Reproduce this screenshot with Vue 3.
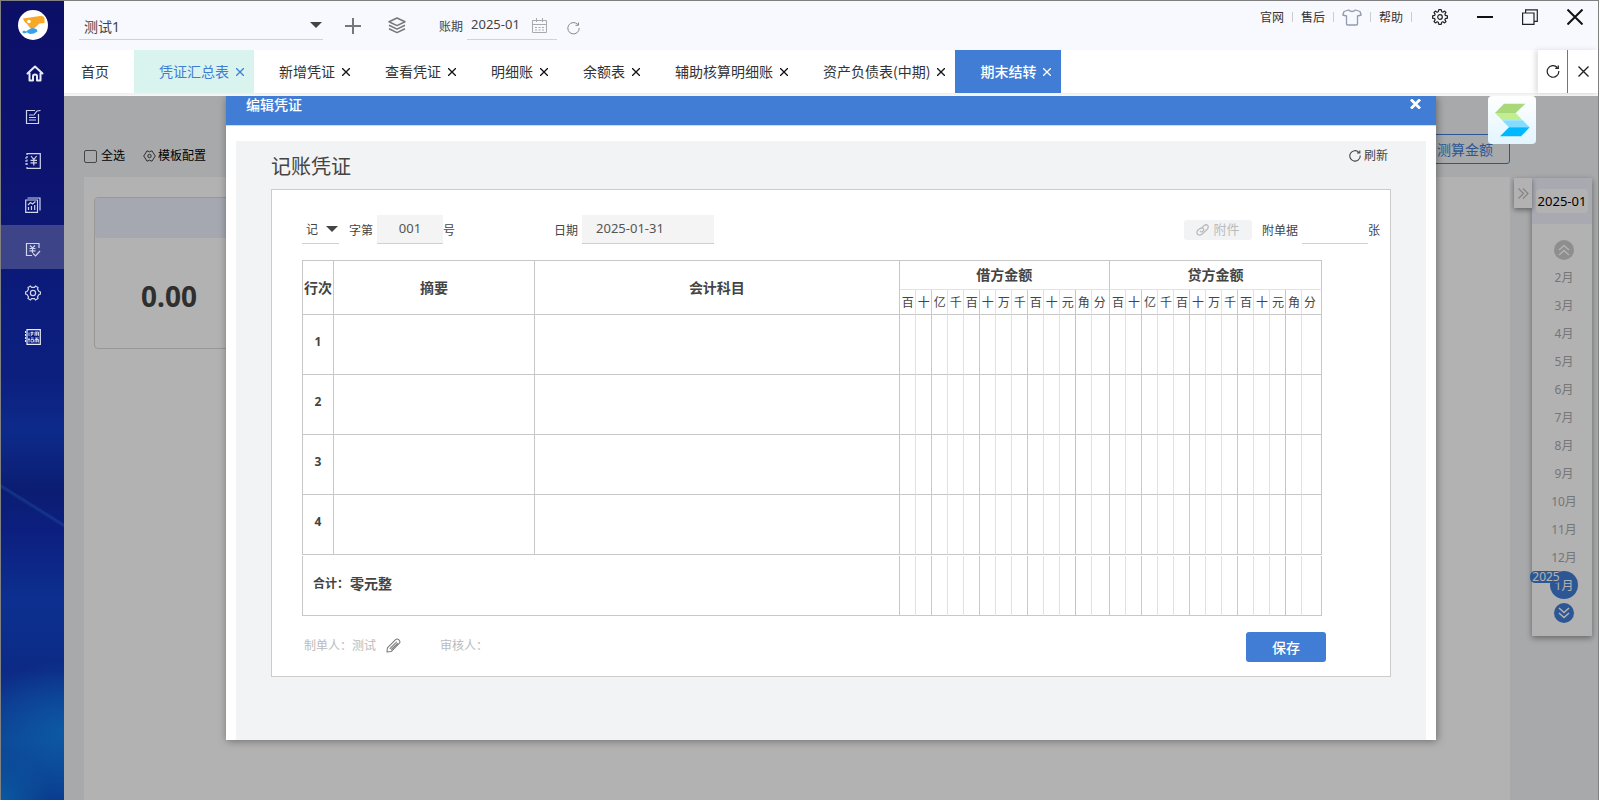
<script setup>
import { ref } from 'vue'

const account = ref('测试1')
const period = ref('2025-01')
const word = ref('记')
const number = ref('001')
const date = ref('2025-01-31')
const attachments = ref('')
const checkedAll = ref(false)

const tabs = [
  { name: '首页', home: true },
  { name: '凭证汇总表', state: 'soft' },
  { name: '新增凭证' },
  { name: '查看凭证' },
  { name: '明细账' },
  { name: '余额表' },
  { name: '辅助核算明细账' },
  { name: '资产负债表(中期)' },
  { name: '期末结转', state: 'current' },
]

const units = ['百', '十', '亿', '千', '百', '十', '万', '千', '百', '十', '元', '角', '分']
const digits = [...units, ...units].map((label, i) => {
  const k = i % 13
  let line = ''
  if (k === 1 || k === 4 || k === 7) line = 'blue'
  else if (k === 10) line = 'red'
  else if (k === 12) line = 'edge'
  return { label, line }
})
const rows = [1, 2, 3, 4]
const months = [2, 3, 4, 5, 6, 7, 8, 9, 10, 11, 12]
</script>

<template>
  <div class="window">
    <nav class="side" aria-label="主导航">
      <div class="logo">
        <svg width="30" height="30" viewBox="0 0 30 30">
          <circle cx="15" cy="15" r="15" fill="#fff" />
          <path d="M5 8.500 L22 6 Q26 5.500 26.500 8 L26.500 13 L21.500 13.500 L15 19.500 L12 18 L9 14 L6 11Z" fill="#f9a825" />
          <circle cx="11" cy="11.500" r="1.800" fill="#fff" />
          <path d="M4 22 L6 20.500 L8 21.500 L10 20 L14 18 L18.500 19 L19.500 21.500 L16 23.500 L12 24 L9 22.500 L6 23.500Z" fill="#3aa0ea" />
        </svg>
      </div>
      <button class="side-item home" aria-label="首页">
        <svg width="18" height="17" viewBox="0 0 18 17" fill="none" stroke="#e8eaf6" stroke-width="2" stroke-linejoin="round" stroke-linecap="round">
          <path d="M1.500 8.500 L9 1.500 L16.500 8.500 M3.500 8 V15.500 H7 V11 Q7 9.500 9 9.500 Q11 9.500 11 11 V15.500 H14.500 V8" />
        </svg>
      </button>
      <button class="side-item" aria-label="凭证">
        <svg width="16" height="16" viewBox="0 0 16 16" fill="none" stroke="#d0d4ec" stroke-width="1.200">
          <path d="M10 1.500 H1.500 V14.500 H13.500 V5 M4 6 H8 M4 8.500 H11 M4 11 H11 M8.500 6.500 L12 2 L15.500 1.500" />
        </svg>
      </button>
      <button class="side-item" aria-label="账簿">
        <svg width="16" height="16" viewBox="0 0 16 16" fill="none" stroke="#d0d4ec" stroke-width="1.200">
          <path d="M2 2 V0.700 H15.300 V15.300 H2 V14" /><path d="M2 3 V13" stroke-dasharray="2 1.500" />
          <path d="M0 5 H2 M0 8 H2 M0 11 H2 M6 3 L8.800 6.500 L11.600 3 M8.800 6.500 V12.500 M5.500 7.300 H12 M5.500 9.800 H12" />
        </svg>
      </button>
      <button class="side-item" aria-label="报表">
        <svg width="16" height="16" viewBox="0 0 16 16" fill="none" stroke="#d0d4ec" stroke-width="1.200">
          <path d="M0.700 3 H12.500 V15.300 H0.700Z M2.500 1 H15 V13.500 M3.500 13 V10 M6.500 13 V9 M9.700 13 V8 M3 8 L5.500 5.500 L7.500 7 L10.500 4.500" />
        </svg>
      </button>
      <button class="side-item on" aria-label="期末结转">
        <svg width="16" height="16" viewBox="0 0 16 16" fill="none" stroke="#d0d4ec" stroke-width="1.200">
          <path d="M14 6 V1.500 H1.500 V13.500 H7 M5 3.500 L7.500 6 L10 3.500 M7.500 6 V11 M4.500 6.500 H10.500 M4.500 8.800 H10.500 M8 11.500 L10.500 14 L15 9" />
        </svg>
      </button>
      <button class="side-item" aria-label="设置">
        <svg width="16" height="16" viewBox="0 0 16 16" fill="none" stroke="#d0d4ec" stroke-width="1.200">
          <path d="M5.500 1 L6.500 2.300 H9.500 L10.500 1 L13 2.500 L12.500 4.200 L14 6.500 L15.500 7 V9 L14 9.500 L12.500 11.800 L13 13.500 L10.500 15 L9.500 13.700 H6.500 L5.500 15 L3 13.500 L3.500 11.800 L2 9.500 L0.500 9 V7 L2 6.500 L3.500 4.200 L3 2.500Z" />
          <circle cx="8" cy="8" r="2.600" />
        </svg>
      </button>
      <button class="side-item" aria-label="使用指南">
        <svg width="16" height="16" viewBox="0 0 16 16" fill="none" stroke="#e8eaf6" stroke-width="1.200">
          <path d="M2 0.700 H15.300 V15.300 H2Z" /><path d="M0.500 2 V14" stroke-dasharray="2 1" />
          <path d="M4 3.500 V7 M5.500 3.500 H8.500 M5.500 5 H8.500 M7 2.500 V6 L5.500 7 M10 7 V3 H13.500 V7 M10 5 H13.500 M11.700 3 V7 M4 9 V13.500 M3 10.500 H5 M6 9 H8.500 M6 10.500 H8.500 V13 H6Z M10 13.500 V10.500 H13.500 V13.500 M10 9 H13.500 M11.700 9 V13.500 M10.500 12 H13" stroke-width="0.800" />
        </svg>
      </button>
    </nav>

    <div class="right">
      <header class="top">
        <div class="top-left">
          <div class="pick account">
            <select v-model="account" aria-label="账套"><option>测试1</option></select>
            <svg width="12" height="6" viewBox="0 0 12 6"><path d="M0 0 H12 L6 6Z" fill="#444" /></svg>
          </div>
          <button class="icon-btn add" aria-label="新增账套">
            <svg width="16" height="16" viewBox="0 0 16 16"><path d="M8 0 V16 M0 8 H16" stroke="#777" stroke-width="2" /></svg>
          </button>
          <button class="icon-btn layers" aria-label="账套列表">
            <svg width="18" height="17" viewBox="0 0 18 17" fill="none" stroke="#777" stroke-width="1.500" stroke-linejoin="round">
              <path d="M9 1 L17 4.800 L9 8.600 L1 4.800Z M1 8.300 L9 12.100 L17 8.300 M1 11.800 L9 15.600 L17 11.800" />
            </svg>
          </button>
          <label class="period-label" for="period">账期</label>
          <div class="period">
            <input id="period" v-model="period" />
            <svg width="15" height="15" viewBox="0 0 15 15" fill="none" stroke="#aaa" stroke-width="1">
              <path d="M0.500 2.500 H14.500 V14.500 H0.500Z M0.500 6.500 H14.500 M4.500 0 V4 M10.500 0 V4" /><path d="M3 9.500 H12 M3 12 H12" stroke-dasharray="2 1.500" />
            </svg>
          </div>
          <button class="icon-btn reload" aria-label="刷新账期">
            <svg width="13" height="13" viewBox="0 0 13 13" fill="none" stroke="#888" stroke-width="1"><path d="M10.800 2.500 A5.700 5.700 0 1 0 12.200 6 M11.500 0.500 V3.300 H8.500" /></svg>
          </button>
        </div>
        <div class="top-right">
          <a href="#">官网</a><i></i><a href="#">售后</a><i></i>
          <button class="icon-btn shirt" aria-label="换肤">
            <svg width="20" height="17" viewBox="0 0 20 17" fill="none" stroke="#8f9bab" stroke-width="1.300" stroke-linejoin="round">
              <path d="M6.500 1 Q10 4 13.500 1 L18 2.500 L19.200 6 L15.500 7 V15 Q15.500 16 14.500 16 H5.500 Q4.500 16 4.500 15 V7 L0.800 6 L2 2.500Z" />
            </svg>
          </button>
          <i></i><a href="#">帮助</a><i></i>
          <button class="icon-btn gear" aria-label="系统设置">
            <svg width="16" height="16" viewBox="0 0 16 16" fill="none" stroke="#222" stroke-width="1.200" stroke-linejoin="round">
              <path d="M6.800 0.700 H9.200 L9.700 2.700 L10.900 3.200 L12.600 2.100 L14 3.500 L12.900 5.200 L13.400 6.400 L15.400 6.800 V9.200 L13.400 9.600 L12.900 10.800 L14 12.500 L12.600 13.900 L10.900 12.800 L9.700 13.300 L9.200 15.300 H6.800 L6.300 13.300 L5.100 12.800 L3.400 13.900 L2 12.500 L3.100 10.800 L2.600 9.600 L0.600 9.200 V6.800 L2.600 6.400 L3.100 5.200 L2 3.500 L3.400 2.100 L5.100 3.200 L6.300 2.700Z" />
              <circle cx="8" cy="8" r="2.300" />
            </svg>
          </button>
          <button class="icon-btn win" aria-label="最小化"><svg width="16" height="16" viewBox="0 0 16 16"><path d="M0 8 H16" stroke="#111" stroke-width="2" /></svg></button>
          <button class="icon-btn win" aria-label="还原">
            <svg width="16" height="16" viewBox="0 0 16 16" fill="none" stroke="#222" stroke-width="1.200"><path d="M0.600 4 H12 V15.400 H0.600Z M3.600 4 V0.800 H15.300 V12.400 H12" /></svg>
          </button>
          <button class="icon-btn win" aria-label="关闭"><svg width="16" height="16" viewBox="0 0 16 16"><path d="M0.500 0.500 L15.500 15.500 M15.500 0.500 L0.500 15.500" stroke="#111" stroke-width="2" /></svg></button>
        </div>
      </header>

      <div class="tabs">
        <div v-for="t in tabs" :key="t.name" class="tab" :class="[t.state, { home: t.home }]">
          <button class="tab-name">{{ t.name }}</button>
          <button v-if="!t.home" class="tab-x" :aria-label="'关闭' + t.name">
            <svg width="8" height="8" viewBox="0 0 8 8"><path d="M0 0 L8 8 M8 0 L0 8" stroke="currentColor" stroke-width="1.300" /></svg>
          </button>
        </div>
        <div class="tab-tools">
          <button aria-label="刷新页面">
            <svg width="14" height="13" viewBox="0 0 14 13" fill="none" stroke="#222" stroke-width="1.200"><path d="M11.300 2.500 A5.800 5.800 0 1 0 12.800 6 M12.300 0.500 V3.300 H9.300" /></svg>
          </button>
          <button aria-label="关闭全部">
            <svg width="11" height="11" viewBox="0 0 11 11"><path d="M0.500 0.500 L10.500 10.500 M10.500 0.500 L0.500 10.500" stroke="#222" stroke-width="1.400" /></svg>
          </button>
        </div>
      </div>

      <main class="main">
        <div class="bar">
          <label class="all"><input v-model="checkedAll" type="checkbox" />全选</label>
          <button class="tpl">
            <svg width="13" height="12" viewBox="0 0 13 12" fill="none" stroke="#444" stroke-width="1">
              <path d="M4 0.800 L6.500 1.800 L9 0.800 L10.300 3 L12.300 6 L10.300 9 L9 11.200 L6.500 10.200 L4 11.200 L2.700 9 L0.700 6 L2.700 3Z" stroke-linejoin="round" /><circle cx="6.500" cy="6" r="1.700" />
            </svg>模板配置
          </button>
          <button class="calc">测算金额</button>
        </div>
        <section class="board">
          <article class="card"><header></header><strong>0.00</strong></article>
        </section>

        <aside class="timeline">
          <button class="fold" aria-label="收起">
            <svg width="11" height="11" viewBox="0 0 11 11" fill="none" stroke="#bbb" stroke-width="1.200"><path d="M0.500 0.500 L5.500 5.500 L0.500 10.500 M5 0.500 L10 5.500 L5 10.500" /></svg>
          </button>
          <div class="now"><span>2025-01</span></div>
          <div class="months">
            <button class="round" aria-label="上一年">
              <svg width="12" height="12" viewBox="0 0 12 12" fill="none" stroke="#fff" stroke-width="1.600"><path d="M1 6 L6 1.500 L11 6 M1 11 L6 6.500 L11 11" /></svg>
            </button>
            <button v-for="m in months" :key="m" class="month">{{ m }}月</button>
            <button class="month picked"><span class="year">2025</span>1月</button>
            <button class="round next" aria-label="下一年">
              <svg width="12" height="12" viewBox="0 0 12 12" fill="none" stroke="#fff" stroke-width="1.600"><path d="M1 1 L6 5.500 L11 1 M1 6 L6 10.500 L11 6" /></svg>
            </button>
          </div>
        </aside>

        <div class="mask">
          <section class="modal" role="dialog" aria-label="编辑凭证">
            <header class="modal-head">
              <h2>编辑凭证</h2>
              <button aria-label="关闭">
                <svg width="11" height="10" viewBox="0 0 11 10"><path d="M1 0.500 L10 9.500 M10 0.500 L1 9.500" stroke="#fff" stroke-width="2.800" /></svg>
              </button>
            </header>
            <div class="modal-body">
              <div class="title">
                <h1>记账凭证</h1>
                <button>
                  <svg width="12" height="12" viewBox="0 0 12 12" fill="none" stroke="#444" stroke-width="1.100"><path d="M9.800 2.300 A5.200 5.200 0 1 0 11.200 5.500 M10.800 0.500 V3 H8" /></svg>刷新
                </button>
              </div>
              <form class="voucher" @submit.prevent>
                <div class="fields">
                  <div class="pick word">
                    <select v-model="word" aria-label="凭证字"><option>记</option></select>
                    <svg width="12" height="6" viewBox="0 0 12 6"><path d="M0 0 H12 L6 6Z" fill="#444" /></svg>
                  </div>
                  <label for="no">字第</label>
                  <input id="no" v-model="number" class="box no" />
                  <span>号</span>
                  <label for="day" class="day-label">日期</label>
                  <input id="day" v-model="date" class="box day" />
                  <button type="button" class="attach">
                    <svg width="13" height="12" viewBox="0 0 13 12" fill="none" stroke="#bbb" stroke-width="1.300" stroke-linecap="round">
                      <path d="M5 4.500 L8 1.700 Q10 0 11.800 1.500 Q13 3.300 11 5.500 L6.500 9.800 Q3.500 12.200 1.500 10.300 Q0 8.300 2 6 L3 5.200 Q5.500 3.300 7 4.200 Q8.500 5.500 6.800 7.200 Q5 8.600 4.300 7.300" />
                    </svg><span>附件</span>
                  </button>
                  <label for="count">附单据</label>
                  <input id="count" v-model="attachments" class="line" />
                  <span>张</span>
                </div>

                <table>
                  <colgroup>
                    <col class="c-index" /><col class="c-note" /><col />
                    <col v-for="(d, i) in digits" :key="i" :class="i === 12 ? 'c-mid' : i === 25 ? 'c-last' : 'c-digit'" />
                  </colgroup>
                  <thead>
                    <tr class="h1">
                      <th rowspan="2">行次</th><th rowspan="2">摘要</th><th rowspan="2">会计科目</th>
                      <th colspan="13" class="group">借方金额</th><th colspan="13" class="group">贷方金额</th>
                    </tr>
                    <tr class="h2"><td v-for="(d, i) in digits" :key="i" :class="['d', d.line]">{{ d.label }}</td></tr>
                  </thead>
                  <tbody>
                    <tr v-for="r in rows" :key="r">
                      <th>{{ r }}</th><td></td><td></td>
                      <td v-for="(d, i) in digits" :key="i" :class="['d', d.line]"></td>
                    </tr>
                  </tbody>
                  <tfoot>
                    <tr class="gap"><td colspan="29"></td></tr>
                    <tr>
                      <td colspan="3" class="sum"><div><span>合计：</span>零元整</div></td>
                      <td v-for="(d, i) in digits" :key="i" :class="['d', d.line]"></td>
                    </tr>
                  </tfoot>
                </table>

                <div class="sign">
                  <span>制单人：测试</span>
                  <button type="button" class="icon-btn" aria-label="修改制单人">
                    <svg width="15" height="15" viewBox="0 0 16 16" fill="none" stroke="#777" stroke-width="1.100" stroke-linejoin="round">
                      <path d="M1 15 L1.500 10.500 L10.500 1.500 Q12 0.500 13.800 2 Q15.500 3.800 14.500 5.300 L5.500 14.500Z M4 11.500 L11.500 4 M5.500 12.500 L12.500 5.500" />
                    </svg>
                  </button>
                  <span class="auditor">审核人：</span>
                  <button class="save">保存</button>
                </div>
              </form>
            </div>
          </section>
        </div>

        <div class="float">
          <svg width="48" height="48" viewBox="0 0 144 144">
            <path d="M48 23 H112 L83 51 H21Z" fill="#a8d878" /><path d="M21 51 H83 L103 72 H42Z" fill="#c0ee90" />
            <path d="M42 73 H104 L125 94 H63Z" fill="#84dcff" /><path d="M63 94 H125 L99 121 H36Z" fill="#00b8ff" />
          </svg>
        </div>
      </main>
    </div>
  </div>
</template>

<style>
body { margin: 0; overflow: hidden; }
</style>

<style scoped>
.window {
  display: flex;
  box-sizing: border-box;
  height: 100vh;
  border: 1px solid #808080;
  border-bottom: 0;
  font-family: "Noto Sans", "Noto Sans CJK SC", sans-serif;
  font-size: 12px;
  line-height: 16px;
  color: #444;
}
.window * { box-sizing: border-box; }
button { padding: 0; border: 0; background: none; font: inherit; color: inherit; }
input, select { border: 0; border-radius: 0; background: none; padding: 0; margin: 0; color: inherit; outline: 0; min-width: 0; }
input { font: 13px/16px "Noto Sans", "Noto Sans CJK SC", sans-serif; }
select { appearance: none; font: inherit; }
svg { display: block; flex: none; }
a { color: #333; text-decoration: none; }
h1, h2 { margin: 0; font-weight: 400; }

.side {
  width: 63px;
  flex: none;
  background:
    linear-gradient(212deg, transparent 47%, rgba(30, 84, 160, 0.45) 49%, rgba(30, 84, 160, 0.3) 51%, transparent 53%) 0 478px / 63px 54px no-repeat,
    radial-gradient(ellipse 90px 70px at 63px 730px, rgba(13, 92, 166, 0.85), rgba(13, 92, 166, 0)),
    radial-gradient(ellipse 50px 50px at 0 799px, rgba(10, 94, 164, 0.85), rgba(10, 94, 164, 0)),
    linear-gradient(#0c0f66, #0c1470 180px, #0b1c7c 300px, #0c1e7e 370px, #0d2a8a 430px, #0b1d72 490px, #0c1f80 530px, #0c3090 600px, #0c2a86 670px, #0c4496 740px, #0a3c8e);
}
.logo { padding: 9px 0 0 17px; height: 50px; }
.side-item { display: flex; align-items: center; justify-content: center; width: 100%; height: 44px; padding-top: 4px; }
.side-item.home { height: 42px; padding: 2px 0 0 4px; }
.side-item.on { background: #3e4488; padding-top: 6px; }

.right { flex: 1; min-width: 0; display: flex; flex-direction: column; }
.top { display: flex; justify-content: space-between; height: 49px; background: #f8f9fe; }
.top-left { display: flex; align-items: center; padding-left: 15px; }
.pick { display: grid; align-items: center; justify-items: end; }
.pick > * { grid-area: 1 / 1; }
.pick select { width: 100%; height: 100%; }
.pick svg { pointer-events: none; }
.account { width: 244px; height: 29px; border-bottom: 1px solid #d0d2d6; font-size: 14px; }
.account select { padding: 3px 0 0 5px; }
.account svg { margin-right: 1px; }
.add { margin-left: 22px; }
.layers { margin-left: 27px; }
.period-label { margin-left: 33px; padding-top: 2px; }
.period { display: flex; align-items: center; width: 90px; height: 29px; margin-left: 4px; border-bottom: 1px solid #d0d2d6; }
.period input { width: 60px; padding: 0 0 2px 4px; }
.period svg { margin-left: 5px; }
.reload { margin: 6px 0 0 10px; }
.top-right { display: flex; align-items: center; height: 32px; padding-right: 15px; }
.top-right i { width: 1px; height: 10px; margin: 0 8px; background: #ccc; }
.top-right a { padding-top: 2px; }
.gear { margin-left: 12px; }
.win { margin-left: 29px; }

.tabs { display: flex; height: 46px; padding-bottom: 3px; background: linear-gradient(#fff 43px, #eee 43px, #f8f8f8 46px); font-family: "Noto Sans CJK SC", sans-serif; font-size: 14px; color: #333; }
.tab { display: flex; align-items: center; gap: 7px; padding: 0 10px 2px 25px; white-space: nowrap; }
.tab.home { padding: 0 25px 2px 17px; }
.tab-x { color: #111; padding-top: 3px; }
.tab.soft { background: #d9f4ef; color: #417dd4; }
.tab.current { background: #417dd4; color: #fff; font-weight: 500; }
.tab.soft .tab-x, .tab.current .tab-x { color: inherit; }
.tab-tools { display: flex; width: 60px; margin-left: auto; box-shadow: -3px 0 5px rgba(0, 0, 0, 0.12); }
.tab-tools button { display: flex; width: 29px; align-items: center; justify-content: center; }
.tab-tools button + button { width: 31px; border-left: 1px solid #417dd4; }

.main { position: relative; flex: 1; display: flex; flex-direction: column; min-height: 0; overflow: hidden; background: #f1f2f4; }
.bar { display: flex; align-items: flex-end; height: 81px; padding: 0 88px 13px 20px; color: #000; }
.all { display: flex; align-items: center; gap: 4px; }
.all input { appearance: none; width: 13px; height: 13px; border: 1px solid #666; border-radius: 2px; }
.tpl { display: flex; align-items: center; gap: 2px; margin-left: 18px; }
.calc { height: 30px; margin-left: auto; padding: 1px 16px 0; border: 1px solid #417dd4; border-radius: 3px; color: #417dd4; font-size: 14px; }
.board { flex: 1; margin: 0 88px 0 20px; padding: 20px 10px; background: #fff; }
.card { display: flex; flex-direction: column; width: 150px; height: 152px; border: 1px solid #d8d8d8; border-radius: 4px; }
.card header { height: 40px; background: #eceffe; border-radius: 3px; }
.card strong { margin: auto; padding-top: 5px; font-size: 28px; line-height: 36px; color: #444; }

.timeline { position: absolute; top: 82px; right: 6px; width: 60px; padding-bottom: 13px; background: #fff; box-shadow: 0 2px 6px rgba(0, 0, 0, 0.4); }
.fold { position: absolute; top: 0; right: 100%; display: flex; align-items: center; justify-content: center; width: 18px; height: 30px; background: #fff; box-shadow: 0 2px 5px rgba(0, 0, 0, 0.4); }
.now { height: 46px; padding: 11px 4px; background: #f2f3fe; }
.now span { display: block; height: 24px; border-radius: 4px; background: #fff; color: #000; font-size: 13px; line-height: 24px; text-align: center; }
.months { display: flex; flex-direction: column; align-items: center; padding: 16px 0 0 4px; color: #aaa; }
.round { display: flex; align-items: center; justify-content: center; width: 20px; height: 20px; margin-bottom: 3px; border-radius: 50%; background: #ccc; }
.round.next { margin: 4px 0 0; background: #417dd4; }
.month { position: relative; width: 28px; height: 28px; padding-top: 1px; white-space: nowrap; }
.month.picked { border-radius: 50%; background: #417dd4; color: #fff; }
.year { position: absolute; top: 0; left: -20px; width: 32px; height: 12px; border-radius: 5px; background: #417dd4; font-size: 12px; line-height: 12px; }

.mask { position: absolute; inset: 0; background: rgba(0, 0, 0, 0.3); }
.modal { margin: 0 162px; background: #fff; box-shadow: 1px 1px 8px rgba(0, 0, 0, 0.4); }
.modal-head { display: flex; justify-content: space-between; height: 30px; padding: 0 15px 0 20px; border-bottom: 1px solid #d4d8e0; background: #417dd4; color: #fff; }
.modal-head h2 { font-size: 14px; font-weight: 500; line-height: 18px; }
.modal-head button { height: 16px; }
.modal-body { margin: 15px 10px 0; padding: 0 35px 63px; background: #f2f3f5; }
.title { display: flex; justify-content: space-between; height: 48px; }
.title h1 { font-size: 20px; line-height: 52px; }
.title button { display: flex; align-items: center; gap: 3px; height: 30px; padding-right: 3px; }
.voucher { padding: 25px 0 14px 30px; border: 1px solid #ccc; background: #fff; }
.fields { display: flex; align-items: center; height: 29px; margin-bottom: 16px; padding-right: 10px; }
.fields > label, .fields > span { padding-top: 2px; }
.word { width: 37px; height: 29px; margin-right: 10px; border-bottom: 1px solid #d0d0d0; }
.word select { padding: 2px 0 0 4px; }
.word svg { margin-right: 1px; }
.box { height: 29px; margin-left: 4px; padding-bottom: 3px; border-bottom: 1px solid #d0d0d0; background: #f4f4f4; color: #555; }
.no { width: 66px; text-align: center; }
.day { width: 132px; padding-left: 14px; }
.day-label { margin-left: 99px; }
.attach { display: flex; align-items: center; justify-content: center; gap: 4px; width: 68px; height: 20px; margin: 0 10px 0 auto; border-radius: 3px; background: #f1f3f5; color: #bbb; font-size: 13px; }
.attach span { padding-bottom: 2px; }
.line { width: 66px; height: 29px; margin-left: 4px; border-bottom: 1px solid #d0d0d0; }

table { width: calc(100% - 68px); table-layout: fixed; border-collapse: separate; border-spacing: 0; }
.c-index { width: 32px; }
.c-note { width: 201px; }
.c-digit { width: 16px; }
.c-mid { width: 18px; }
.c-last { width: 20px; }
th, td { padding: 0; border: 1px solid #c8c8c8; border-width: 0 1px 1px 0; text-align: center; }
tr > :first-child:not(.d) { border-left-width: 1px; }
thead th { border-top-width: 1px; font-size: 14px; font-weight: 700; }
.h1 { height: 30px; }
.h2 { height: 25px; }
.h2 td { padding: 2px 0 0 2px; text-align: left; white-space: nowrap; }
th.group { border-bottom-color: #e2e2e2; }
tbody tr { height: 60px; }
tbody th { padding-bottom: 5px; font-size: 12px; }
.d { border-right-color: #e2e2e2; }
.d.blue { border-right-color: #a0d8f4; }
.d.red { border-right-color: #f2b0b0; }
.d.edge { border-right-color: #c8c8c8; }
tfoot tr { height: 60px; }
tfoot .gap { height: 1px; }
tfoot .gap td { border-color: transparent; border-bottom-width: 0; }
.sum { padding: 0 0 3px 10px; text-align: left; font-size: 14px; font-weight: 700; }
.sum div { display: flex; align-items: center; gap: 1px; }
.sum span { font-size: 12px; }
.sign { display: flex; align-items: center; height: 30px; margin: 16px 64px 0 0; padding-left: 2px; color: #bbb; }
.sign > span, .sign .icon-btn { padding-bottom: 3px; }
.sign .icon-btn { margin-left: 10px; }
.auditor { margin-left: 39px; }
.save { width: 80px; height: 30px; padding-top: 1px; margin-left: auto; border-radius: 3px; background: #417dd4; color: #fff; font-size: 14px; font-weight: 500; }

.float { position: absolute; top: 0; right: 62px; width: 48px; height: 48px; border-radius: 4px; background: linear-gradient(#fff, #e2f5ff); }
</style>
